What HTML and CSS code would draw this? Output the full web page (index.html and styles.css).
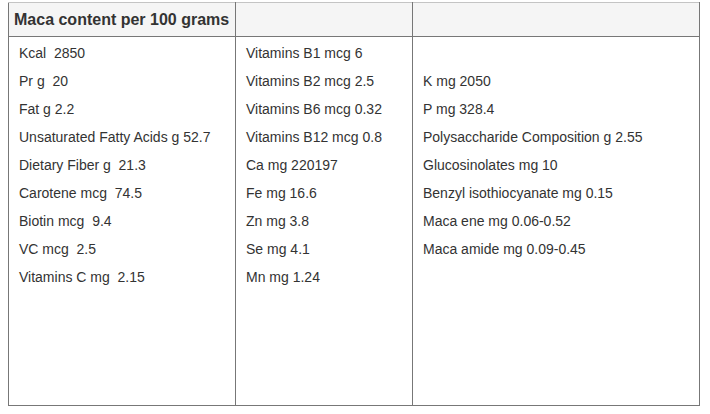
FILE: index.html
```html
<!DOCTYPE html>
<html>
<head>
<meta charset="utf-8">
<link rel="stylesheet" href="styles.css">
</head>
<body>
<table class="nutri">
  <thead>
    <tr class="head-row">
      <th class="c1">Maca content per 100 grams</th>
      <th class="c2"></th>
      <th class="c3"></th>
    </tr>
  </thead>
  <tbody>
    <tr class="body-row">
      <td>
        <div class="line">Kcal&nbsp; 2850</div>
        <div class="line">Pr g&nbsp; 20</div>
        <div class="line">Fat g 2.2</div>
        <div class="line">Unsaturated Fatty Acids g 52.7</div>
        <div class="line">Dietary Fiber g&nbsp; 21.3</div>
        <div class="line">Carotene mcg&nbsp; 74.5</div>
        <div class="line">Biotin mcg&nbsp; 9.4</div>
        <div class="line">VC mcg&nbsp; 2.5</div>
        <div class="line">Vitamins C mg&nbsp; 2.15</div>
      </td>
      <td>
        <div class="line">Vitamins B1 mcg 6</div>
        <div class="line">Vitamins B2 mcg 2.5</div>
        <div class="line">Vitamins B6 mcg 0.32</div>
        <div class="line">Vitamins B12 mcg 0.8</div>
        <div class="line">Ca mg 220197</div>
        <div class="line">Fe mg 16.6</div>
        <div class="line">Zn mg 3.8</div>
        <div class="line">Se mg 4.1</div>
        <div class="line">Mn mg 1.24</div>
      </td>
      <td>
        <div class="line">&nbsp;</div>
        <div class="line">K mg 2050</div>
        <div class="line">P mg 328.4</div>
        <div class="line">Polysaccharide Composition g 2.55</div>
        <div class="line">Glucosinolates mg 10</div>
        <div class="line">Benzyl isothiocyanate mg 0.15</div>
        <div class="line">Maca ene mg 0.06-0.52</div>
        <div class="line">Maca amide mg 0.09-0.45</div>
      </td>
    </tr>
  </tbody>
</table>
</body>
</html>
```

FILE: styles.css
```css
html, body {
  margin: 0;
  padding: 0;
  background: #fff;
}
body {
  padding: 2px 8px 0 8px;
  font-family: "Liberation Sans", Arial, sans-serif;
  color: #333;
}
.nutri {
  border-collapse: collapse;
  width: 692px;
  table-layout: fixed;
}
.nutri th, .nutri td {
  border: 1px solid #777;
  vertical-align: top;
  text-align: left;
}
.head-row th {
  background: #f5f5f5;
  border-top-color: #c4c4c4;
  height: 33px;
  padding: 0 5px;
  box-sizing: border-box;
  font-size: 16px;
  font-weight: bold;
  line-height: 33px;
  color: #333;
}
.c1 { width: 227px; }
.c2 { width: 177px; }
.c3 { width: auto; }
.body-row td {
  height: 369px;
  box-sizing: border-box;
  padding: 2px 10px;
  font-size: 14px;
  line-height: 28px;
}
.line {
  white-space: nowrap;
}
```
